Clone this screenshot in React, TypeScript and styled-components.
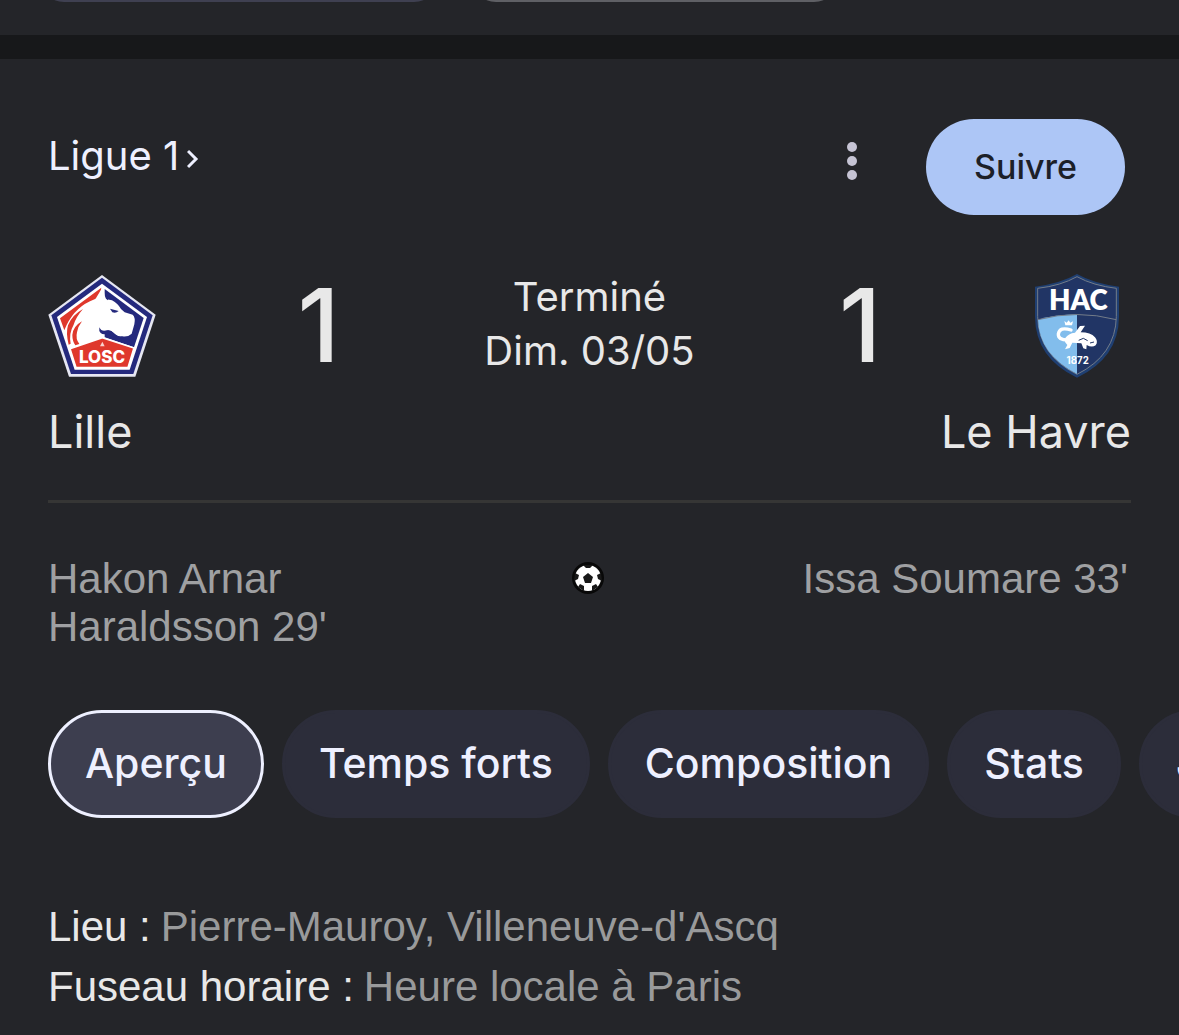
import React from "react";
import styled, { createGlobalStyle } from "styled-components";

const GlobalStyle = createGlobalStyle`
  * {
    box-sizing: border-box;
  }

  body {
    margin: 0;
    background-color: #242529;
    color: #e8e8e8;
    font-family: "Liberation Sans", Arial, sans-serif;
    overflow-x: hidden;
  }
`;

const display = `Inter, Roboto, sans-serif`;

const PreviousCard = styled.div`
  display: flex;
  align-items: flex-end;
  gap: 34px;
  height: 2px;
  padding: 0 40px;
  margin-bottom: 33px;
  overflow: hidden;
`;

const PreviousPill = styled.div<{ $width: number; $color: string }>`
  flex: none;
  width: ${(p) => p.$width}px;
  height: 96px;
  border-radius: 24px;
  background-color: ${(p) => p.$color};
`;

const Separator = styled.div`
  height: 24px;
  background-color: #17181a;
`;

const Card = styled.main`
  padding: 60px 48px 16px;
`;

const Header = styled.header`
  display: flex;
  align-items: center;
  height: 96px;
  padding-right: 6px;
`;

const LeagueLink = styled.a`
  display: flex;
  align-items: center;
  gap: 8px;
  margin: 0 auto 22px 0;
  color: #eef0ff;
  font-family: ${display};
  font-size: 40px;
  line-height: 48px;
  text-decoration: none;
`;

const Chevron = styled.svg`
  width: 12px;
  height: 20px;
  margin-top: 6px;
`;

const MenuButton = styled.button`
  display: flex;
  align-items: center;
  justify-content: center;
  width: 48px;
  height: 48px;
  margin: 0 50px 12px 0;
  padding: 0;
  border: none;
  background: none;
  cursor: pointer;
`;

const FollowButton = styled.button`
  height: 96px;
  padding: 0 48px 2px;
  border: none;
  border-radius: 48px;
  background-color: #adc6f6;
  color: #1c2028;
  font-family: ${display};
  font-size: 34px;
  font-weight: 500;
  cursor: pointer;
`;

const Scoreboard = styled.section`
  display: grid;
  grid-template-columns: 1fr 2fr 2fr 2fr 1fr;
  align-items: center;
  margin-top: 54px;
  height: 112px;
`;

const Crest = styled.svg<{ $end?: boolean }>`
  display: block;
  width: 108px;
  height: 108px;
  justify-self: ${(p) => (p.$end ? "end" : "start")};
`;

const Score = styled.span`
  font-family: ${display};
  font-size: 102px;
  font-weight: 500;
  line-height: 112px;
  text-align: center;
`;

const Status = styled.p`
  margin: 0;
  padding-bottom: 2px;
  font-family: ${display};
  font-size: 40px;
  line-height: 54px;
  text-align: center;
  white-space: nowrap;
`;

const Teams = styled.div`
  display: flex;
  justify-content: space-between;
  margin-top: 23px;
  padding-bottom: 40px;
  border-bottom: 3px solid #363635;
  font-family: ${display};
  font-size: 45px;
  line-height: 56px;
`;

const Scorers = styled.section`
  display: grid;
  grid-template-columns: 1fr 32px 1fr;
  margin-top: 52px;
  padding-right: 3px;
  color: #9fa0a2;
  font-size: 42px;
  line-height: 48px;
`;

const Scorer = styled.span<{ $end?: boolean }>`
  max-width: 340px;
  justify-self: ${(p) => (p.$end ? "end" : "start")};
`;

const Ball = styled.svg`
  display: block;
  width: 32px;
  height: 32px;
  margin-top: 7px;
`;

const Tabs = styled.nav`
  display: flex;
  gap: 18px;
  margin: 59px -48px 0 0;
  overflow: hidden;
`;

const Tab = styled.button<{ $active?: boolean }>`
  flex: none;
  height: 108px;
  padding: 0 34px 2px;
  border: 3px solid ${(p) => (p.$active ? "#eef0ff" : "#2c2d3a")};
  border-radius: 54px;
  background-color: ${(p) => (p.$active ? "#3d3e4f" : "#2c2d3a")};
  color: #eef0ff;
  font-family: ${display};
  font-size: 41px;
  font-weight: 500;
  cursor: pointer;
`;

const Details = styled.dl`
  margin: 79px 0 0;
  font-size: 42px;
  line-height: 60px;
`;

const DetailRow = styled.div`
  display: flex;
  gap: 10px;
`;

const Label = styled.dt`
  color: #e8e8e8;
`;

const Value = styled.dd`
  margin: 0;
  color: #999a9b;
`;

const LilleCrest: React.FC = () => (
  <Crest viewBox="24 18 324 324" role="img" aria-label="Lille">
    <path d="M186 30 L347 149 L286 335 H87 L25 149 Z" fill="#e6e7f2" />
    <path d="M186 38 L338 151 L280 327 H93 L34 151 Z" fill="#24297d" />
    <path d="M186 56 L321 156 L269 314 H104 L51 156 Z" fill="#fff" />
    <path d="M194 72 L311 159 L282 247 L194 217 Z" fill="#24297d" />
    <path d="M184 68 L179 96 L150 109 Q97 134 73 196 L60 160 Z" fill="#df382c" />
    {/* mastiff head */}
    <path
      d="M188 66 L194 92 L200 103 L216 106 Q234 116 243 132 L254 142 L278 149 Q287 157 283 178 L275 206 Q264 217 246 214 Q232 216 222 205 Q212 193 196 197 Q182 198 180 185 L140 210 L100 220 L110 160 L165 104 Z"
      fill="#fff"
    />
    <path d="M197 79 L211 90 L209 103 L204 94 L204 106 L197 100 Z" fill="#24297d" />
    <path d="M210 131 L236 138 Q228 146 217 142 Z" fill="#24297d" />
    <path d="M178 187 Q184 200 197 197 Q211 192 220 203 Q229 214 246 215 L258 217 L242 222 Q221 221 211 208 L202 206 Q190 211 182 204 Q176 198 178 187 Z" fill="#24297d" />
    <path d="M129 132 Q96 150 84 181 Q77 204 86 239 L92 236 Q86 205 101 179 Q108 156 129 132 Z" fill="#df382c" />
    <path d="M126 169 Q99 184 97 210 Q97 228 106 241 L118 237 Q106 222 111 202 Q114 184 126 169 Z" fill="#df382c" />
    <path d="M90 251 L187 218 L282 249 L264 308 H108 Z" fill="#df382c" stroke="#fff" strokeWidth="5" />
    <path d="M187 230 L194 244 H180 Z" fill="#f9d4ce" />
    <text x="186" y="295" textAnchor="middle" fill="#fff" fontFamily="Inter, sans-serif" fontWeight="800" fontSize="51">
      LOSC
    </text>
  </Crest>
);

const LeHavreCrest: React.FC = () => (
  <Crest $end viewBox="9 18 324 324" role="img" aria-label="Le Havre">
    <path d="M171 27 Q220 55 297 65 V155 Q296 278 171 338 Q46 278 45 155 V65 Q123 55 171 27 Z" fill="#1f3f72" />
    <path d="M171 35 Q220 62 289 70 V155 Q287 270 171 328 Q55 270 53 155 V70 Q123 62 171 35 Z" fill="#213565" stroke="#737c89" strokeWidth="3" />
    <path d="M54 164 Q110 149 171 148 V327 Q57 268 54 164 Z" fill="#82bdec" />
    <path d="M54 164 Q171 133 289 164" fill="none" stroke="#737c89" strokeWidth="3" />
    <text x="175" y="134" textAnchor="middle" fill="#fff" fontFamily="Lato, sans-serif" fontWeight="800" fontSize="83">
      HAC
    </text>
    {/* salamander */}
    <path d="M133 168 L140 173 L146 166 L151 173 L159 169 L156 181 H136 Z" fill="#fff" />
    <path d="M153 195 Q119 184 115 207 Q114 225 143 225" fill="none" stroke="#fff" strokeWidth="10" strokeLinecap="round" />
    <path
      d="M136 219 Q145 205 165 203 L180 183 L195 182 L182 202 Q212 202 225 217 Q236 230 227 241 Q216 249 200 240 L199 253 L190 250 L184 235 L157 233 L149 249 L135 253 L142 240 L135 231 Z"
      fill="#fff"
    />
    <path d="M176 226 L190 220 L203 227 M210 234 L222 231" fill="none" stroke="#213565" strokeWidth="3" />
    <text x="173" y="298" textAnchor="middle" fill="#fff" fontFamily="Inter, sans-serif" fontWeight="700" fontSize="29">
      1872
    </text>
  </Crest>
);

const tabs = ["Aperçu", "Temps forts", "Composition", "Stats", "Joueurs"];

const App: React.FC = () => {
  const [active, setActive] = React.useState(tabs[0]);

  return (
    <>
      <GlobalStyle />
      <PreviousCard>
        <PreviousPill $width={398} $color="#3f4051" />
        <PreviousPill $width={366} $color="#5f6065" />
      </PreviousCard>
      <Separator />
      <Card>
        <Header>
          <LeagueLink href="#ligue-1">
            Ligue 1
            <Chevron viewBox="0 0 12 20" fill="none" stroke="currentColor" strokeWidth="3">
              <path d="M1 2 L9 10 L1 18" />
            </Chevron>
          </LeagueLink>
          <MenuButton aria-label="Plus d'options">
            <svg width="12" height="38" viewBox="0 0 12 38" fill="#c6c4d4">
              <circle cx="6" cy="5" r="5" />
              <circle cx="6" cy="19" r="5" />
              <circle cx="6" cy="33" r="5" />
            </svg>
          </MenuButton>
          <FollowButton>Suivre</FollowButton>
        </Header>
        <Scoreboard>
          <LilleCrest />
          <Score>1</Score>
          <Status>
            Terminé
            <br />
            Dim. 03/05
          </Status>
          <Score>1</Score>
          <LeHavreCrest />
        </Scoreboard>
        <Teams>
          <span>Lille</span>
          <span>Le Havre</span>
        </Teams>
        <Scorers>
          <Scorer>Hakon Arnar Haraldsson 29'</Scorer>
          <Ball viewBox="0 0 32 32">
            <circle cx="16" cy="16" r="16" fill="#080808" />
            <circle cx="16" cy="16" r="13" fill="#fff" />
            <path
              d="M16 11 L21 15 L19 21 H13 L11 15 Z M11 3 H21 L18 6 H14 Z M3 11 L7 13 L6 17 L2 19 Z M29 11 L25 13 L26 17 L30 19 Z M6 25 L8 22 L12 24 L12 29 Z M26 25 L24 22 L20 24 L20 29 Z"
              fill="#181818"
            />
          </Ball>
          <Scorer $end>Issa Soumare 33'</Scorer>
        </Scorers>
        <Tabs>
          {tabs.map((tab) => (
            <Tab key={tab} $active={tab === active} onClick={() => setActive(tab)}>
              {tab}
            </Tab>
          ))}
        </Tabs>
        <Details>
          <DetailRow>
            <Label>Lieu :</Label>
            <Value>Pierre-Mauroy, Villeneuve-d'Ascq</Value>
          </DetailRow>
          <DetailRow>
            <Label>Fuseau horaire :</Label>
            <Value>Heure locale à Paris</Value>
          </DetailRow>
        </Details>
      </Card>
    </>
  );
};

export default App;
